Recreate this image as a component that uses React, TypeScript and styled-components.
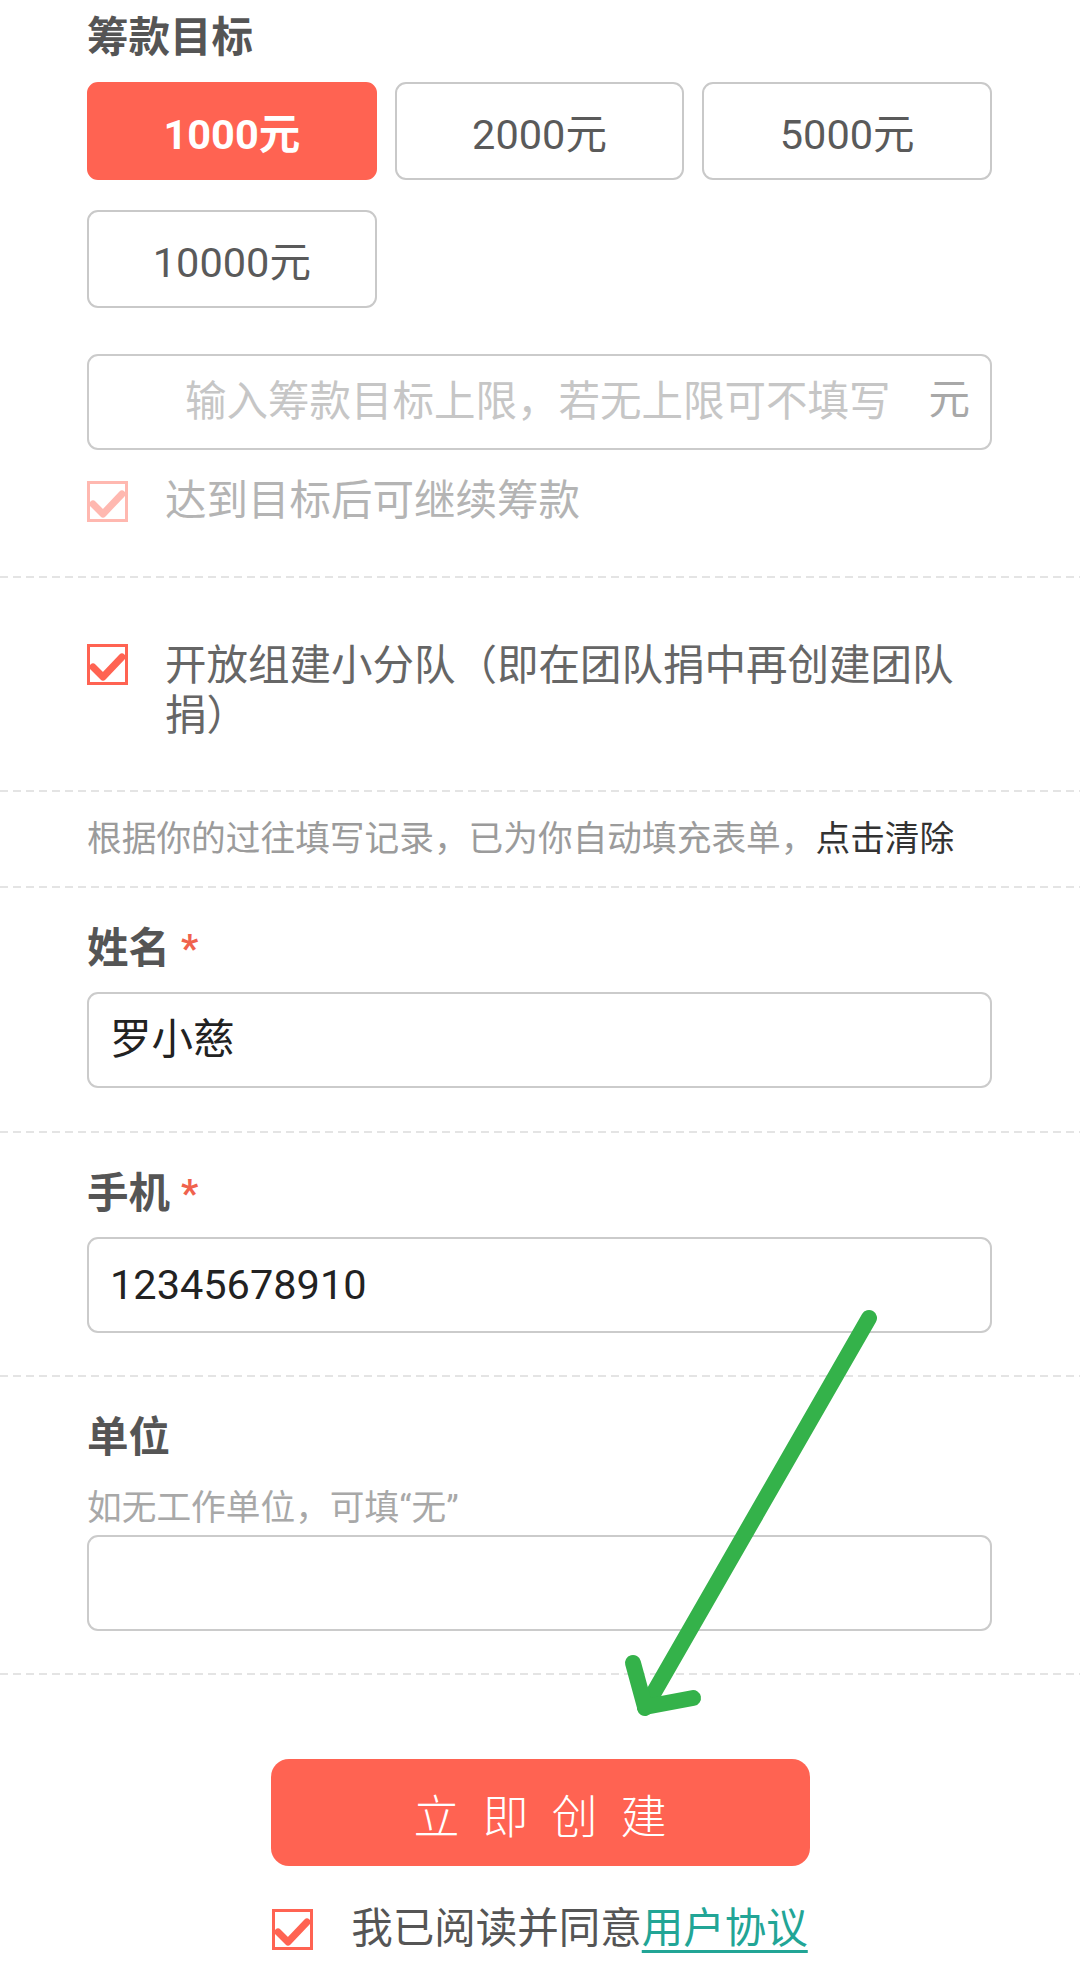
import React from 'react';
import styled, { createGlobalStyle } from 'styled-components';

const GlobalStyle = createGlobalStyle`
  html, body {
    margin: 0;
    padding: 0;
    background: #fff;
  }
  body {
    font-family: Roboto, 'Noto Sans CJK SC', sans-serif;
    color: #333;
  }
  * {
    box-sizing: border-box;
  }
`;

const RED = '#ff6352';

const Page = styled.div`
  position: relative;
  width: 1080px;
  min-height: 1985px;
  background: #fff;
`;

const Section = styled.div<{ $top?: number; $bottom?: number }>`
  padding: ${(p) => p.$top ?? 0}px 88px ${(p) => p.$bottom ?? 0}px 87px;
`;

const Divider = styled.div`
  height: 2px;
  background: repeating-linear-gradient(
    90deg,
    #e4e4e4 0,
    #e4e4e4 8px,
    transparent 8px,
    transparent 13px
  );
`;

const Title = styled.h2`
  margin: 0;
  font-size: 41.5px;
  line-height: 50px;
  font-weight: 700;
  color: #555;
`;

const AmountGrid = styled.div`
  margin-top: 19px;
  display: grid;
  grid-template-columns: repeat(3, 1fr);
  column-gap: 18px;
  row-gap: 30px;
`;

const AmountButton = styled.button<{ $active?: boolean }>`
  height: 98px;
  border-radius: 11px;
  border: 2px solid ${(p) => (p.$active ? RED : '#c9c9c9')};
  background: ${(p) => (p.$active ? RED : '#fff')};
  color: ${(p) => (p.$active ? '#fff' : '#5a5a5a')};
  font-family: Roboto, 'Noto Sans CJK SC', sans-serif;
  font-size: 41.5px;
  font-weight: ${(p) => (p.$active ? 700 : 400)};
  padding: 0;
`;

const InputBox = styled.div<{ $mt: number }>`
  margin-top: ${(p) => p.$mt}px;
  height: 96px;
  border: 2px solid #cbcbcb;
  border-radius: 11px;
  display: flex;
  align-items: center;
  padding: 0 20px 0 21px;
`;

const TextInput = styled.input<{ $right?: boolean }>`
  flex: 1;
  min-width: 0;
  border: none;
  outline: none;
  background: transparent;
  padding: 0;
  font-family: Roboto, 'Noto Sans CJK SC', sans-serif;
  font-size: 41.5px;
  line-height: 50px;
  color: #222;
  text-align: ${(p) => (p.$right ? 'right' : 'left')};
  &::placeholder {
    color: #c6c6c6;
  }
`;

const Suffix = styled.span`
  margin-left: 38px;
  margin-bottom: 4px;
  font-size: 41.5px;
  line-height: 50px;
  color: #a8a8a8;
`;

const CheckRow = styled.div<{ $mt?: number; $align?: string }>`
  margin-top: ${(p) => p.$mt ?? 0}px;
  display: flex;
  align-items: ${(p) => p.$align ?? 'center'};
  gap: 37px;
`;

const Box = styled.span<{ $faded?: boolean; $offset?: number }>`
  flex: none;
  width: 41px;
  height: 41px;
  margin-top: ${(p) => p.$offset ?? 0}px;
  border: 3px solid ${RED};
  opacity: ${(p) => (p.$faded ? 0.45 : 1)};
  display: flex;
  align-items: center;
  justify-content: center;
  background: #fff;
`;

const CheckText = styled.span<{ $muted?: boolean }>`
  font-size: 41.5px;
  line-height: 50px;
  color: ${(p) => (p.$muted ? '#b4b4b4' : '#666')};
`;

const Hint = styled.p`
  margin: 0;
  font-size: 34.7px;
  line-height: 50px;
  color: #9b9b9b;
  white-space: nowrap;
`;

const HintAction = styled.span`
  color: #333;
`;

const Label = styled.div`
  font-size: 41.5px;
  line-height: 50px;
  font-weight: 700;
  color: #555;
  display: flex;
  align-items: center;
`;

const Star = styled.span`
  margin-left: 11px;
  color: #f0624d;
  font-weight: 700;
  font-size: 38px;
`;

const SubHint = styled.div`
  margin-top: 23px;
  font-size: 34.7px;
  line-height: 44px;
  color: #a8a8a8;
`;

const Footer = styled.div`
  padding-top: 84px;
  display: flex;
  flex-direction: column;
  align-items: center;
`;

const SubmitButton = styled.button`
  width: 539px;
  height: 107px;
  border: none;
  border-radius: 18px;
  background: ${RED};
  color: #fff;
  font-family: Roboto, 'Noto Sans CJK SC', sans-serif;
  font-size: 46px;
  font-weight: 300;
  letter-spacing: 23px;
  padding: 0 0 0 23px;
`;

const Agreement = styled.div`
  margin-top: 38px;
  display: flex;
  align-items: center;
  gap: 38px;
`;

const AgreementText = styled.span`
  font-size: 41.5px;
  line-height: 50px;
  color: #555;
`;

const Link = styled.a`
  color: #22a596;
  text-decoration: underline;
  text-underline-offset: 7px;
  text-decoration-thickness: 3px;
`;

const ArrowLayer = styled.svg`
  position: absolute;
  left: 600px;
  top: 1290px;
  pointer-events: none;
`;

function Check() {
  return (
    <svg width="35" height="35" viewBox="0 0 35 35">
      <path
        d="M3 20 L13 30 L32 10"
        fill="none"
        stroke={RED}
        strokeWidth="7"
        strokeLinecap="round"
        strokeLinejoin="round"
      />
    </svg>
  );
}

const amounts = ['1000元', '2000元', '5000元', '10000元'];

export default function App() {
  return (
    <Page>
      <GlobalStyle />
      <Section $top={13} $bottom={50}>
        <Title>筹款目标</Title>
        <AmountGrid>
          {amounts.map((a, i) => (
            <AmountButton key={a} $active={i === 0}>
              {a}
            </AmountButton>
          ))}
        </AmountGrid>
        <InputBox $mt={46}>
          <TextInput $right placeholder="输入筹款目标上限，若无上限可不填写" />
          <Suffix>元</Suffix>
        </InputBox>
        <CheckRow $mt={26}>
          <Box $faded>
            <Check />
          </Box>
          <CheckText $muted>达到目标后可继续筹款</CheckText>
        </CheckRow>
      </Section>
      <Divider />
      <Section $top={63} $bottom={49}>
        <CheckRow $align="flex-start">
          <Box $offset={3}>
            <Check />
          </Box>
          <CheckText>开放组建小分队（即在团队捐中再创建团队捐）</CheckText>
        </CheckRow>
      </Section>
      <Divider />
      <Section $top={22} $bottom={22}>
        <Hint>
          根据你的过往填写记录，已为你自动填充表单，
          <HintAction>点击清除</HintAction>
        </Hint>
      </Section>
      <Divider />
      <Section $top={36} $bottom={43}>
        <Label>
          姓名<Star>*</Star>
        </Label>
        <InputBox $mt={18}>
          <TextInput defaultValue="罗小慈" />
        </InputBox>
      </Section>
      <Divider />
      <Section $top={36} $bottom={42}>
        <Label>
          手机<Star>*</Star>
        </Label>
        <InputBox $mt={18}>
          <TextInput defaultValue="12345678910" />
        </InputBox>
      </Section>
      <Divider />
      <Section $top={36} $bottom={42}>
        <Label>单位</Label>
        <SubHint>如无工作单位，可填“无”</SubHint>
        <InputBox $mt={5}>
          <TextInput />
        </InputBox>
      </Section>
      <Divider />
      <Footer>
        <SubmitButton>立即创建</SubmitButton>
        <Agreement>
          <Box>
            <Check />
          </Box>
          <AgreementText>
            我已阅读并同意<Link>用户协议</Link>
          </AgreementText>
        </Agreement>
      </Footer>
      <ArrowLayer width="300" height="440" viewBox="600 1290 300 440">
        <g
          fill="none"
          stroke="#34b24a"
          strokeWidth="16"
          strokeLinecap="round"
          strokeLinejoin="round"
        >
          <path d="M869 1318 L645 1708" />
          <path d="M633 1663 L645 1707 L693 1698" />
        </g>
      </ArrowLayer>
    </Page>
  );
}
